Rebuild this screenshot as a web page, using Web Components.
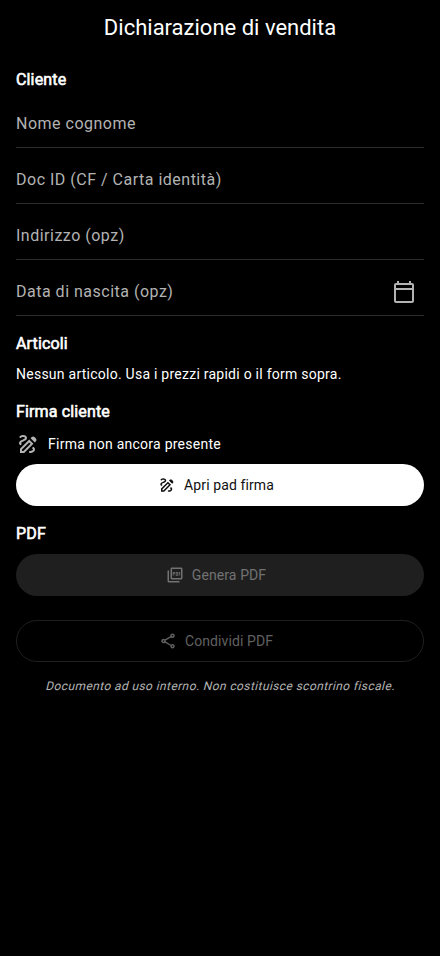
<!DOCTYPE html>
<html lang="it">
<head>
<meta charset="utf-8">
<title>Dichiarazione di vendita</title>
<style>
html,body{margin:0;background:#000;height:100%}
body{font-family:Roboto,"Liberation Sans",sans-serif;color:#fff}
</style>
</head>
<body>
<sale-page></sale-page>
<script>
const ICONS={
draw:'M18.85 10.39l1.06-1.06c.78-.78.78-2.05 0-2.83L18.5 5.09c-.78-.78-2.05-.78-2.83 0l-1.06 1.06 4.24 4.24zm-4.24 1.42L7.41 19H6v-1.41l7.19-7.19 1.42 1.41zm-1.42-4.25L4 16.76V21h4.24l9.19-9.19-4.24-4.25zM19 17.5c0 2.19-2.54 3.5-5 3.5-.55 0-1-.45-1-1s.45-1 1-1c1.54 0 3-.73 3-1.5 0-.47-.48-.87-1.23-1.2l1.48-1.48c1.07.63 1.75 1.47 1.75 2.68zM4.58 13.35C3.61 12.79 3 12.06 3 11c0-1.8 1.89-2.63 3.56-3.36C7.59 7.18 9 6.56 9 6c0-.41-.78-1-2-1-1.26 0-1.8.61-1.83.64-.35.41-.98.46-1.4.12-.41-.34-.49-.95-.15-1.38C3.73 4.24 4.76 3 7 3s4 1.32 4 3c0 1.87-1.93 2.72-3.64 3.47C6.42 9.88 5 10.5 5 11c0 .31.43.6 1.07.86l-1.49 1.49z',
pdf:'M20 2H8c-1.1 0-2 .9-2 2v12c0 1.1.9 2 2 2h12c1.1 0 2-.9 2-2V4c0-1.1-.9-2-2-2zm0 14H8V4h12v12zM4 6H2v14c0 1.1.9 2 2 2h14v-2H4V6zm12 6V9c0-.55-.45-1-1-1h-2v5h2c.55 0 1-.45 1-1zm-2-3h1v3h-1V9zm4 2h1v-1h-1V9h1V8h-2v5h1zm-8 0h1c.55 0 1-.45 1-1V9c0-.55-.45-1-1-1H9v5h1v-2zm0-2h1v1h-1V9z',
share:'M18 16.08c-.76 0-1.44.3-1.96.77L8.91 12.7c.05-.23.09-.46.09-.7s-.04-.47-.09-.7l7.05-4.11c.54.5 1.25.81 2.04.81 1.66 0 3-1.34 3-3s-1.34-3-3-3-3 1.34-3 3c0 .24.04.47.09.7L8.04 9.81C7.5 9.31 6.79 9 6 9c-1.66 0-3 1.34-3 3s1.34 3 3 3c.79 0 1.5-.31 2.04-.81l7.12 4.16c-.05.21-.08.43-.08.65 0 1.61 1.31 2.92 2.92 2.92s2.92-1.31 2.92-2.92-1.31-2.92-2.92-2.92zM18 4c.55 0 1 .45 1 1s-.45 1-1 1-1-.45-1-1 .45-1 1-1zM6 13c-.55 0-1-.45-1-1s.45-1 1-1 1 .45 1 1-.45 1-1 1zm12 7.02c-.55 0-1-.45-1-1s.45-1 1-1 1 .45 1 1-.45 1-1 1z',
calendar:'M20 3h-1V1h-2v2H7V1H5v2H4c-1.1 0-2 .9-2 2v16c0 1.1.9 2 2 2h16c1.1 0 2-.9 2-2V5c0-1.1-.9-2-2-2zm0 18H4V10h16v11zm0-13H4V5h16v3z'};
const define=(name,html)=>customElements.define(name,class extends HTMLElement{
  constructor(){super();this.attachShadow({mode:'open'}).innerHTML=html;}
});
customElements.define('md-icon',class extends HTMLElement{
  connectedCallback(){
    if(this.shadowRoot)return;
    this.attachShadow({mode:'open'}).innerHTML=`<style>:host{display:block;flex:none;width:var(--size,24px);height:var(--size,24px)}svg{display:block;width:100%;height:100%;fill:currentColor}</style><svg viewBox="0 0 24 24"><path d="${ICONS[this.getAttribute('name')]}"/></svg>`;
  }
});
define('app-bar','<style>:host{display:flex;height:56px;align-items:center;justify-content:center}h1{margin:0;font-weight:400;font-size:22px;line-height:28px}</style><h1><slot></slot></h1>');
define('section-title','<style>:host{display:block}h2{margin:0;font-weight:400;font-size:16px;line-height:24px;letter-spacing:.15px;-webkit-text-stroke:.6px currentColor;white-space:nowrap}</style><h2><slot></slot></h2>');
define('form-field','<style>:host{display:flex;box-sizing:border-box;height:56px;align-items:center;justify-content:space-between;border-bottom:1px solid #2b2b2b;color:#b3b3b3;font-size:16px;line-height:24px;letter-spacing:.5px;padding:8px 8px 0 0}</style><span><slot></slot></span><slot name="icon"></slot>');
define('pill-button','<style>:host{display:flex;box-sizing:border-box;height:42px;border-radius:21px;align-items:center;justify-content:center;gap:8px;padding:0 24px 0 16px;background:#fff;color:#101010;font-size:14px;line-height:20px;letter-spacing:.1px;--size:18px}:host([kind=disabled]){background:#1f1f1f;color:#727272}:host([kind=outlined]){background:none;border:1px solid #1f1f1f;color:#616161}</style><slot name="icon"></slot><span><slot></slot></span>');
define('status-row','<style>:host{display:flex;height:24px;align-items:center;gap:8px;font-size:14px;letter-spacing:.25px}md-icon{color:#b3b3b3}</style><md-icon name="draw"></md-icon><span><slot></slot></span>');
define('sale-page',`<style>
:host{display:block}
main{display:flex;flex-direction:column;padding:12px 16px 0}
p{margin:0;font-size:14px;line-height:20px;letter-spacing:.25px}
.articles{margin:16px 0 8px}
.empty{margin-bottom:16px}
.sign{margin-bottom:8px}
.open{margin:8px 0 16px}
.pdf{margin-bottom:8px}
.share{margin:24px 0 16px}
.note{font-size:12px;line-height:16px;letter-spacing:.4px;text-align:center;color:#b3b3b3;transform:skewX(-14deg);transform-origin:50% 12px}
</style>
<app-bar>Dichiarazione di vendita</app-bar>
<main>
<section-title>Cliente</section-title>
<form-field>Nome cognome</form-field>
<form-field>Doc ID (CF / Carta identità)</form-field>
<form-field>Indirizzo (opz)</form-field>
<form-field>Data di nascita (opz)<md-icon slot="icon" name="calendar"></md-icon></form-field>
<section-title class="articles">Articoli</section-title>
<p class="empty">Nessun articolo. Usa i prezzi rapidi o il form sopra.</p>
<section-title class="sign">Firma cliente</section-title>
<status-row>Firma non ancora presente</status-row>
<pill-button class="open"><md-icon slot="icon" name="draw"></md-icon>Apri pad firma</pill-button>
<section-title class="pdf">PDF</section-title>
<pill-button kind="disabled"><md-icon slot="icon" name="pdf"></md-icon>Genera PDF</pill-button>
<pill-button class="share" kind="outlined"><md-icon slot="icon" name="share"></md-icon>Condividi PDF</pill-button>
<p class="note">Documento ad uso interno. Non costituisce scontrino fiscale.</p>
</main>`);
</script>
</body>
</html>
